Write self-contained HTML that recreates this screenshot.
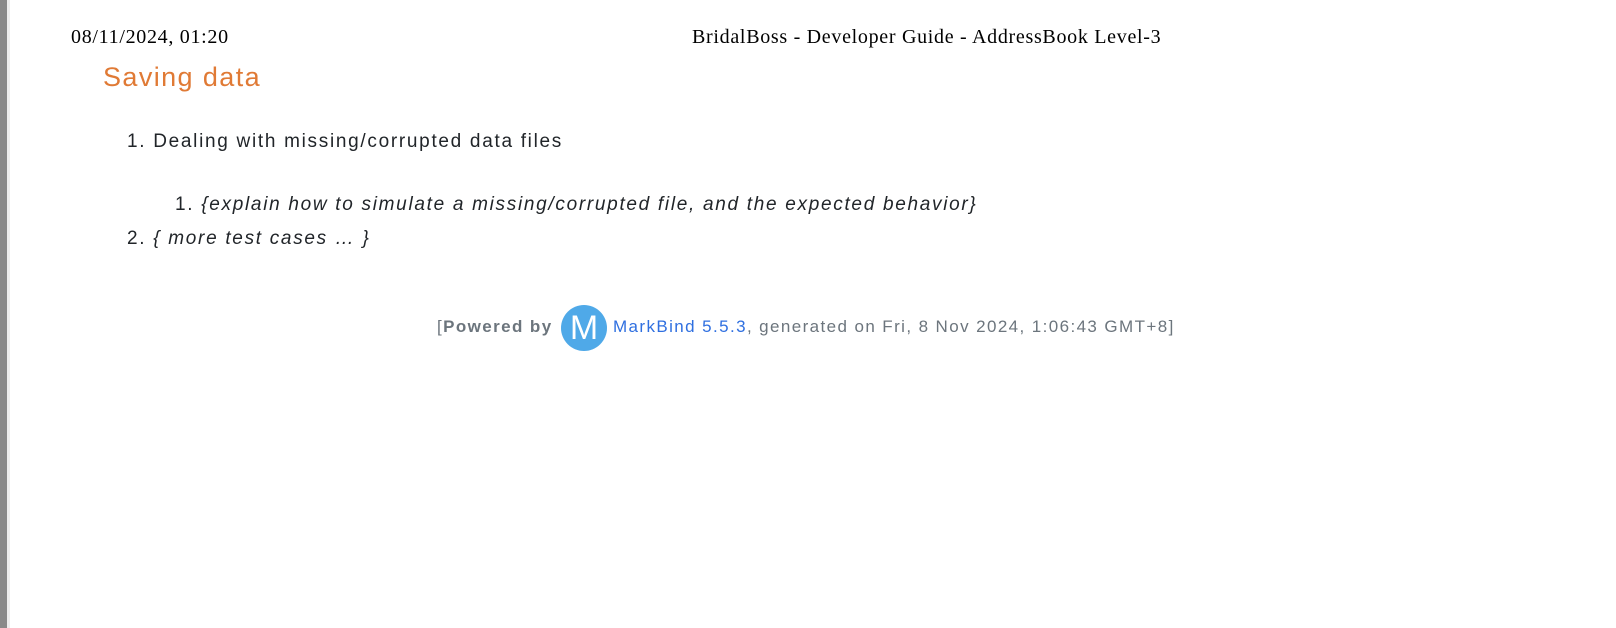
<!DOCTYPE html>
<html><head><meta charset="utf-8"><style>
body{margin:0;width:1616px;height:628px;background:#fff;position:relative;overflow:hidden;font-family:"Liberation Sans",Helvetica,sans-serif;}
.lb{position:absolute;left:0;top:0;width:7px;height:628px;background:#8a8a8a}
.lb2{position:absolute;left:7px;top:0;width:3px;height:628px;background:#eee}
.t{position:absolute;font-family:"Liberation Serif",serif;font-size:20px;color:#000;white-space:nowrap;letter-spacing:0.7px}
.a{position:absolute;white-space:nowrap;color:#212529;font-size:19px;letter-spacing:1.7px}
</style></head><body>
<div class="lb"></div><div class="lb2"></div>
<div class="t" style="left:71px;top:26px">08/11/2024, 01:20</div>
<div class="t" style="left:692px;top:26px">BridalBoss - Developer Guide - AddressBook Level-3</div>
<div class="a" style="left:103px;top:62px;font-size:27px;color:#e07a35;letter-spacing:1.4px">Saving data</div>
<div class="a" style="left:127px;top:131px">1. Dealing with missing/corrupted data files</div>
<div class="a" style="left:175px;top:194px">1. <i>{explain how to simulate a missing/corrupted file, and the expected behavior}</i></div>
<div class="a" style="left:127px;top:228px">2. <i>{ more test cases … }</i></div>
<div class="a" style="left:437px;top:317px;font-size:17px;color:#6c757d;letter-spacing:1.4px">[<b>Powered by</b></div>
<div style="position:absolute;left:561px;top:305px;width:46px;height:46px;border-radius:50%;background:#4fa9e8;color:#fff;font-size:34px;line-height:46px;text-align:center;font-family:'Liberation Sans',sans-serif">M</div>
<div class="a" style="left:613px;top:317px;font-size:17px;color:#6c757d;letter-spacing:1.4px"><span style="color:#2f6fe0">MarkBind 5.5.3</span>, generated on Fri, 8 Nov 2024, 1:06:43 GMT+8]</div>
</body></html>
